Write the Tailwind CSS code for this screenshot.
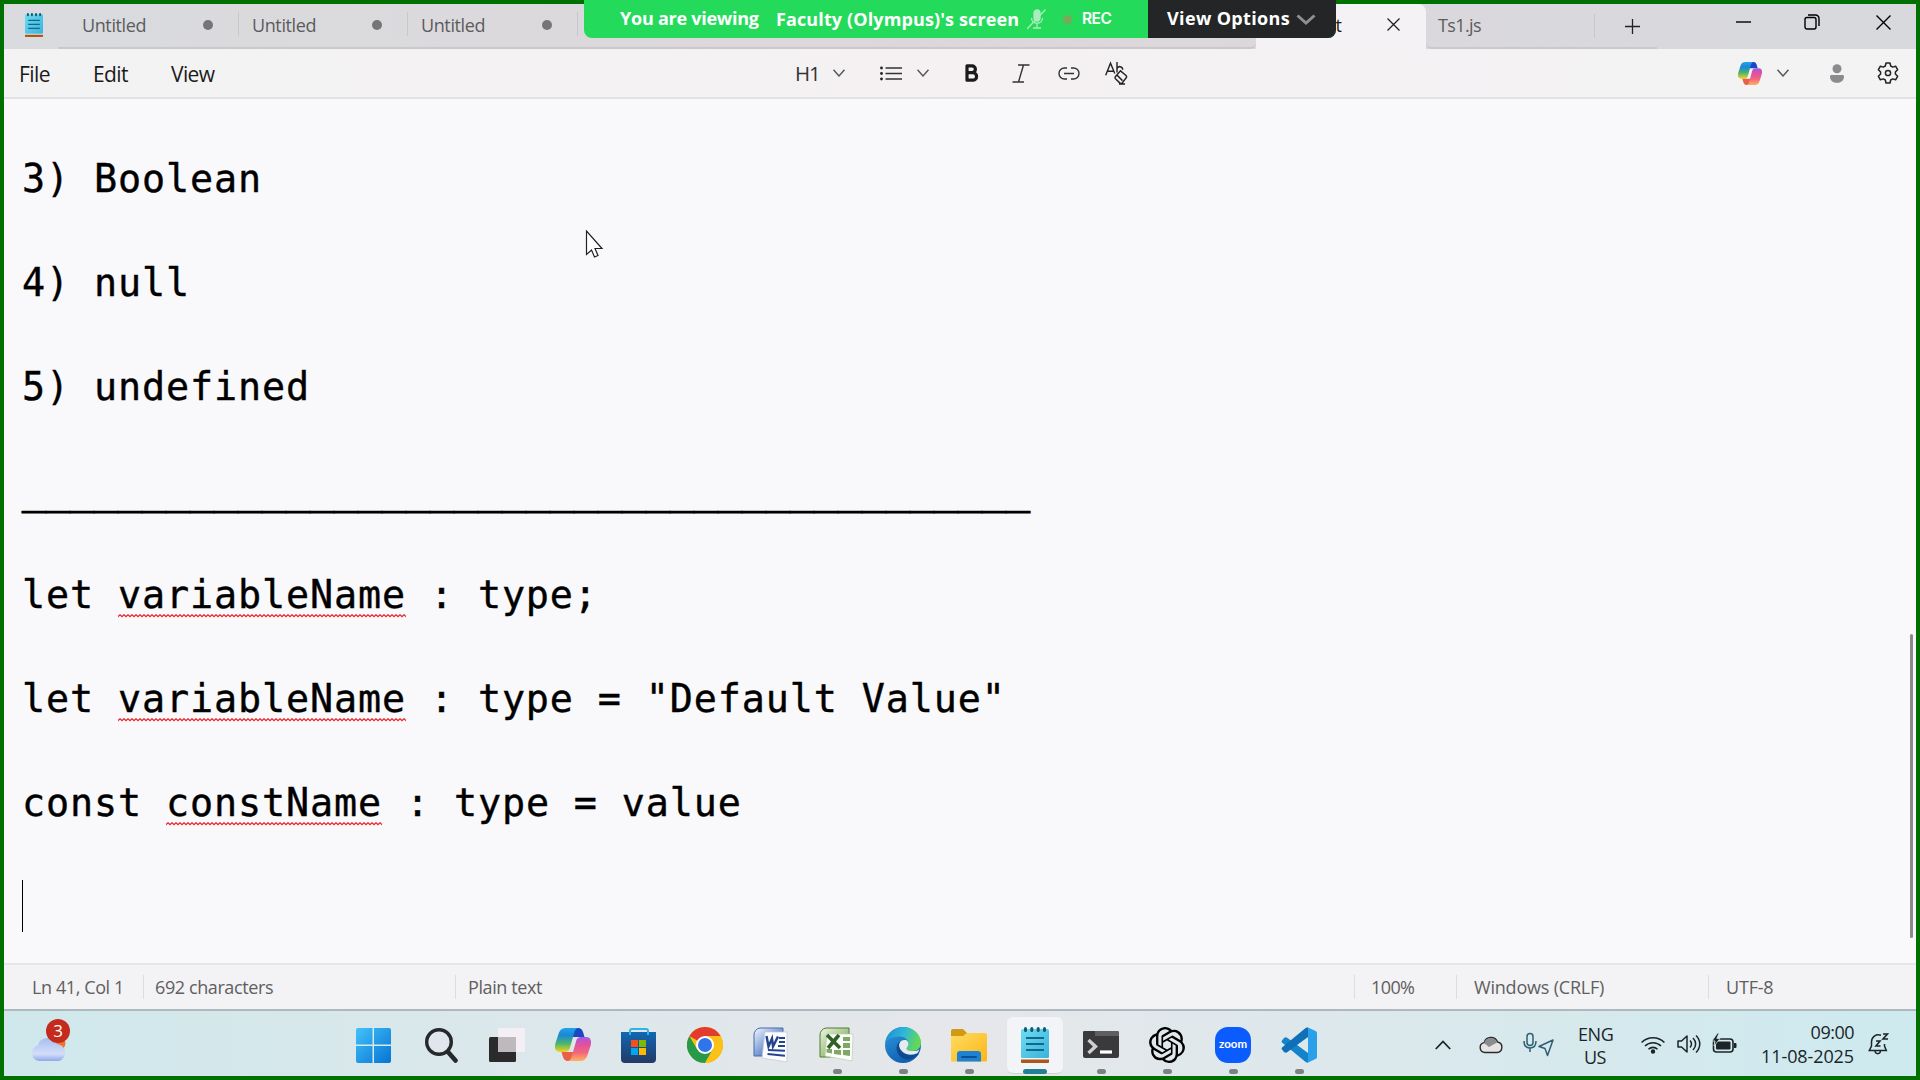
<!DOCTYPE html>
<html lang="en">
<head>
<meta charset="utf-8">
<title>Notepad</title>
<script src="https://cdn.jsdelivr.net/npm/@tailwindcss/browser@4"></script>
</head>
<body class="relative w-[1920px] h-[1080px] overflow-hidden font-['Open_Sans',sans-serif] text-lg leading-6">

<svg class="absolute size-0" aria-hidden="true">
  <defs>
    <linearGradient id="cpA" x1="0" y1="0" x2="0" y2="1"><stop offset="0" stop-color="#1fa4ea"/><stop offset=".3" stop-color="#1b86d8"/><stop offset=".65" stop-color="#4db56c"/><stop offset="1" stop-color="#f2d51c"/></linearGradient>
    <linearGradient id="cpB" x1="0" y1="0" x2="0" y2="1"><stop offset="0" stop-color="#ffb35c"/><stop offset=".35" stop-color="#f2667e"/><stop offset=".7" stop-color="#e0509f"/><stop offset="1" stop-color="#a259e6"/></linearGradient>
    <linearGradient id="npG" x1="0" y1="0" x2="1" y2="1"><stop offset="0" stop-color="#6fdcf2"/><stop offset="1" stop-color="#3ab2dc"/></linearGradient>
    <linearGradient id="winG" gradientUnits="userSpaceOnUse" x1="0" y1="0" x2="35" y2="35"><stop offset="0" stop-color="#42c3fa"/><stop offset="1" stop-color="#0673d3"/></linearGradient>
    <linearGradient id="stG" x1="0" y1="0" x2="0" y2="1"><stop offset="0" stop-color="#1167b3"/><stop offset="1" stop-color="#223a66"/></linearGradient>
    <linearGradient id="edA" x1="0" y1="0" x2="1" y2=".3"><stop offset="0" stop-color="#1d86d4"/><stop offset=".55" stop-color="#2fb8d6"/><stop offset="1" stop-color="#63d75a"/></linearGradient>
    <linearGradient id="edB" x1="0" y1="0" x2=".5" y2="1"><stop offset="0" stop-color="#2b9be0"/><stop offset="1" stop-color="#1160b0"/></linearGradient>
    <linearGradient id="foG" x1="0" y1="0" x2="1" y2="1"><stop offset="0" stop-color="#ffdc62"/><stop offset="1" stop-color="#fbb618"/></linearGradient>
    <linearGradient id="clG" x1="0" y1="0" x2="0" y2="1"><stop offset="0" stop-color="#a9bff0"/><stop offset=".7" stop-color="#d3ddf8"/><stop offset="1" stop-color="#8fa8ea"/></linearGradient>
    <linearGradient id="woG" x1="0" y1="0" x2="1" y2="1"><stop offset="0" stop-color="#f2f6fd"/><stop offset=".5" stop-color="#7f9fd6"/><stop offset="1" stop-color="#2a4a96"/></linearGradient>
    <linearGradient id="exG" x1="0" y1="0" x2="1" y2="1"><stop offset="0" stop-color="#eef5e4"/><stop offset=".5" stop-color="#a9c88c"/><stop offset="1" stop-color="#4f8436"/></linearGradient>
    <pattern id="wave" width="4" height="4" patternUnits="userSpaceOnUse"><path d="M-1 3.500 2 .8 5 3.500" fill="none" stroke="#e8282c" stroke-width="1.300"/></pattern>
    <symbol id="copilot" viewBox="0 0 36 33" preserveAspectRatio="none">
      <path fill="#1a48c4" d="M17 0h6c3.500 0 4.500 2.500 5.300 5L29.500 9H18z"/>
      <path fill="url(#cpA)" d="M11 0h12c-2.500.600-3.300 3-4 5.500L15 19.500c-1 3.500-2.500 4.500-5.500 4.500H5c-4.500 0-6-3.500-4.500-9L3.500 6C4.700 2 7 0 11 0z"/>
      <g transform="rotate(180 18 16.500)">
        <path fill="#e8604a" d="M17 0h6c3.500 0 4.500 2.500 5.300 5L29.500 9H18z"/>
        <path fill="url(#cpB)" d="M11 0h12c-2.500.600-3.300 3-4 5.500L15 19.500c-1 3.500-2.500 4.500-5.500 4.500H5c-4.500 0-6-3.500-4.500-9L3.500 6C4.700 2 7 0 11 0z"/>
      </g>
    </symbol>
    <symbol id="notepad" viewBox="0 0 28 36" preserveAspectRatio="none">
      <rect x="0" y="30" width="28" height="6" rx="1" fill="#a9571b"/>
      <rect x="0" y="30" width="28" height="2.500" fill="#f4f4f4"/>
      <rect x="0" y="2" width="28" height="29" rx="1.500" fill="url(#npG)"/>
      <g fill="#125a72"><rect x="3" y="0" width="3" height="5" rx="1.500"/><rect x="9.300" y="0" width="3" height="5" rx="1.500"/><rect x="15.700" y="0" width="3" height="5" rx="1.500"/><rect x="22" y="0" width="3" height="5" rx="1.500"/></g>
      <path d="M5 11h18M5 17h18M5 23h18" stroke="#0f6987" stroke-width="2"/>
    </symbol>
    <symbol id="chev" viewBox="0 0 12 8" preserveAspectRatio="none"><path d="M.5.800 6 7 11.500.800" fill="none" stroke="currentColor" stroke-width="1.400"/></symbol>
  </defs>
</svg>

<div class="relative w-full h-full border-4 border-[#007000] flex flex-col bg-[#f9f8fb]">

  <!-- Tab strip -->
  <header class="h-[45px] shrink-0 flex bg-linear-to-r from-[#d9dbde] via-[#ddd7db] to-[#d7d9dd] text-[#5c5c5e]">
    <div class="w-[54px] flex pl-[21px] pt-[9px]"><svg class="w-[18px] h-6"><use href="#notepad"/></svg></div>
    <div class="w-[1198px] h-full flex border-b-2 border-[#cbc7cb] rounded-br-md pl-[11px]">
      <div class="w-[170px] h-[43px] flex items-center pl-[13px] pb-[9px]"><span class="tracking-[-0.4px] w-[120px] mt-[7px]">Untitled</span><i class="size-[10px] rounded-full bg-[#757577] mt-[8px] ml-px"></i><b class="ml-auto w-px h-6 bg-[#c9c7ca] mt-1.5"></b></div>
      <div class="w-[169px] h-[43px] flex items-center pl-[13px] pb-[9px]"><span class="tracking-[-0.4px] w-[119px] mt-[7px]">Untitled</span><i class="size-[10px] rounded-full bg-[#757577] mt-[8px] ml-px"></i><b class="ml-auto w-px h-6 bg-[#c9c7ca] mt-1.5"></b></div>
      <div class="w-[170px] h-[43px] flex items-center pl-[13px] pb-[9px]"><span class="tracking-[-0.4px] w-[120px] mt-[7px]">Untitled</span><i class="size-[10px] rounded-full bg-[#757577] mt-[8px] ml-px"></i><b class="ml-auto w-px h-6 bg-[#c9c7ca] mt-1.5"></b></div>
    </div>
    <div class="w-[170px] h-full bg-[#f4f2f4] rounded-tr-lg flex items-center text-[#1b1b1b]">
      <span class="w-[86px] text-right -mt-1">t</span>
      <svg class="w-[13px] h-[13px] ml-[45px] -mt-1" viewBox="0 0 13 13"><path d="M.5.500l12 12M12.500.500l-12 12" stroke="#222" stroke-width="1.300"/></svg>
    </div>
    <div class="w-[231px] h-full border-b-2 border-[#cbc7cb] rounded-bl-md flex items-center pl-[12px]">
      <span class="tracking-[-0.6px] w-[156px] -mt-0.5">Ts1.js</span><b class="w-px h-6 bg-[#c9c7ca] mt-px"></b>
      <svg class="size-[15px] ml-[30px] mt-0.5" viewBox="0 0 15 15"><path d="M7.500 0v15M0 7.500h15" stroke="#222" stroke-width="1.300"/></svg>
    </div>
    <div class="flex h-9 items-center text-black">
      <svg class="w-[15px] h-4 ml-[79px]" viewBox="0 0 15 16"><path d="M0 8h15" stroke="currentColor" stroke-width="1.400"/></svg>
      <svg class="size-[16px] ml-[53px]" viewBox="0 0 16 16" fill="none" stroke="currentColor" stroke-width="1.400"><rect x="1" y="3.500" width="11" height="11.500" rx="2"/><path d="M4 1h7.500a3.500 3.500 0 0 1 3.500 3.500V12"/></svg>
      <svg class="size-[15px] ml-[56px]" viewBox="0 0 15 15"><path d="M.5.500l14 14M14.500.500l-14 14" stroke="currentColor" stroke-width="1.400"/></svg>
    </div>
  </header>

  <!-- Menu and formatting bar -->
  <nav class="h-[50px] shrink-0 flex items-center bg-linear-to-r from-[#f3f3f3] via-[#f5f1f3] to-[#f3f3f4] border-b-2 border-[#e3e2e3] text-[#1b1b1b] text-[21px]">
    <span class="ml-[15px] w-[74px] mt-0.5 tracking-[-0.6px]">File</span>
    <span class="w-[78px] mt-0.5 tracking-[-0.6px]">Edit</span>
    <span class="w-[624px] mt-0.5 tracking-[-0.6px]">View</span>
    <span class="w-[38px] text-[20.5px] tracking-[-1px] text-[#333]">H1</span>
    <svg class="w-[12px] h-[8px] text-[#555]"><use href="#chev"/></svg>
    <svg class="w-[22px] h-[15px] ml-[35px]" viewBox="0 0 22 15"><path d="M5.500 2H22M5.500 7.500H22M5.500 13H22" stroke="#333" stroke-width="1.400"/><g fill="#222"><circle cx="1.500" cy="2" r="1.400"/><circle cx="1.500" cy="7.500" r="1.400"/><circle cx="1.500" cy="13" r="1.400"/></g></svg>
    <svg class="w-[12px] h-[8px] ml-[15px] text-[#555]"><use href="#chev"/></svg>
    <svg class="w-[14px] h-[18px] ml-[36px]" viewBox="0 0 14 18"><path d="M2 1.800h5a3.400 3.400 0 0 1 0 6.800H2zM2 8.600h5.800a3.800 3.800 0 0 1 0 7.600H2z" fill="none" stroke="#1b1b1b" stroke-width="3.200" stroke-linejoin="round"/></svg>
    <svg class="w-[18px] h-[19px] ml-[33px]" viewBox="0 0 18 19"><path d="M6 1h11.500M.5 18H12M11.500 1l-5 17" fill="none" stroke="#333" stroke-width="1.400"/></svg>
    <svg class="w-[22px] h-[13px] ml-[28px]" viewBox="0 0 22 13" fill="none" stroke="#333" stroke-width="1.400"><path d="M9 1H6.500a5.500 5.500 0 0 0 0 11H9M13 1h2.500a5.500 5.500 0 0 1 0 11H13M6 6.500h10"/></svg>
    <svg class="w-[23px] h-[24px] ml-[25px]" viewBox="0 0 23 22" preserveAspectRatio="none" fill="none" stroke="#222" stroke-width="1.400"><path d="M.7 13 5.500 2l4.300 9.500M2.300 9.300h6M12 1v9.500M12 7c1-2.800 5.800-2.300 5.700 1"/><path d="m15.500 9 5.500 4.300c.8.700.8 1.300.2 2L17 20.300c-.7.700-1.300.7-2 0l-4.500-4c-.7-.7-.6-1.300 0-2zM12 13l5.500 5M14 21h6"/></svg>
    <svg class="w-[24px] h-[23px] ml-[610px]"><use href="#copilot"/></svg>
    <svg class="w-[12px] h-[8px] ml-[15px] text-[#555]"><use href="#chev"/></svg>
    <svg class="w-[14px] h-[19px] ml-[41px]" viewBox="0 0 14 19" fill="#8b8b8d"><circle cx="7" cy="4.700" r="4.500"/><path d="M1.500 11h11c1 0 1.500.500 1.500 1.500 0 4-3 6.300-7 6.300s-7-2.300-7-6.300c0-1 .5-1.500 1.500-1.500z"/></svg>
    <svg class="size-[22px] ml-[33px]" viewBox="0 0 22 22" fill="none" stroke="#222" stroke-width="1.500" stroke-linejoin="round"><path d="M9 1h4l.7 3 2 1.100 2.900-.9 2 3.500L18.400 10v2l2.200 2.300-2 3.500-2.900-.9-2 1.100-.7 3H9l-.7-3-2-1.100-2.900.9-2-3.500L3.600 12v-2L1.400 7.700l2-3.500 2.900.9 2-1.100z"/><circle cx="11" cy="11" r="2.600"/></svg>
  </nav>

  <!-- Document -->
  <main class="relative h-[864px] shrink-0 pl-[18px] pt-[54px] font-['DejaVu_Sans_Mono',monospace] text-[38.4px] leading-[52px] tracking-[0.88px] text-black [-webkit-text-stroke:0.4px_black]">
    <p class="h-[104px]">3) Boolean</p>
    <p class="h-[104px]">4) null</p>
    <p class="h-[104px]">5) undefined</p>
    <p class="h-[104px] -mt-px mb-px text-[39.87px] tracking-normal [-webkit-text-stroke:1.2px_black]">__________________________________________</p>
    <p class="h-[104px]">let <span class="relative inline-block">variableName<svg class="absolute left-0 top-[45px] w-full h-1"><rect width="100%" height="4" fill="url(#wave)"/></svg></span> : type;</p>
    <p class="h-[104px]">let <span class="relative inline-block">variableName<svg class="absolute left-0 top-[45px] w-full h-1"><rect width="100%" height="4" fill="url(#wave)"/></svg></span> : type = "Default Value"</p>
    <p class="h-[104px]">const <span class="relative inline-block">constName<svg class="absolute left-0 top-[45px] w-full h-1"><rect width="100%" height="4" fill="url(#wave)"/></svg></span> : type = value</p>
    <p class="h-[52px] -mt-px border-l border-black"></p>
    <i class="absolute right-[3px] top-[535px] w-[3px] h-[304px] rounded bg-[#8b8a8d]"></i>
    <svg class="absolute left-[581px] top-[131px] w-[20px] h-[29px]" viewBox="0 0 20 29"><path d="M1.500 1v23.500l5-4.500 3 7 3.500-1.500-3-7H17z" fill="#fff" stroke="#222" stroke-width="1.200"/></svg>
  </main>

  <!-- Status bar -->
  <footer class="h-[48px] shrink-0 flex items-center border-t-2 border-t-[#e6e5e7] border-b-2 border-b-[#adb9bf] bg-[#f3f2f4] text-[#5f5f61]">
    <span class="ml-[28px] w-[111px] tracking-[-0.4px]">Ln 41, Col 1</span><b class="w-px h-6 bg-[#dddce0]"></b>
    <span class="ml-[11px] w-[300px] tracking-[-0.4px]">692 characters</span><b class="w-px h-6 bg-[#dddce0]"></b>
    <span class="ml-[12px] w-[886px] tracking-[-0.4px]">Plain text</span><b class="w-px h-6 bg-[#dddce0]"></b>
    <span class="ml-[16px] w-[85px] tracking-[-0.6px]">100%</span><b class="w-px h-6 bg-[#dddce0]"></b>
    <span class="ml-[17px] w-[234px] tracking-[-0.2px]">Windows (CRLF)</span><b class="w-px h-6 bg-[#dddce0]"></b>
    <span class="ml-[17px] tracking-[-0.2px]">UTF-8</span>
  </footer>

  <!-- Taskbar -->
  <div class="h-[65px] shrink-0 flex bg-linear-to-r from-[#cfe8ec] via-[#e6e7ea] to-[#cdeaef] text-[#1b2528]">
    <div class="relative w-[336px] h-full">
      <svg class="absolute left-[25px] top-[13px] w-10 h-[38px]" viewBox="0 0 40 38"><circle cx="29" cy="19" r="7.500" fill="#f2742b"/><path d="M10 37a8 8 0 0 1-1.500-15.500A10.500 10.500 0 0 1 28 20a8.700 8.700 0 0 1 2 17z" fill="url(#clG)"/></svg>
      <span class="absolute left-[42px] top-2 size-6 rounded-full bg-[#c42b1c] text-white text-[17px] text-center">3</span>
    </div>
    <div class="flex h-full">
      <div class="w-[66px] pt-[17px] pl-4"><svg class="size-[35px]" viewBox="0 0 35 35"><path fill="url(#winG)" d="M2 0h14.500v16.500H0V2a2 2 0 0 1 2-2zM18 0h15a2 2 0 0 1 2 2v14.500H18zM0 18h16.500v17H2a2 2 0 0 1-2-2zM18 18h17v15a2 2 0 0 1-2 2H18z"/></svg></div>
      <div class="w-[66px] pt-[17px] pl-[19px]"><svg class="w-[33px] h-[35px]" viewBox="0 0 33 35"><circle cx="14" cy="14" r="12.300" fill="#dfe6ec" stroke="#24292c" stroke-width="3.400"/><path d="m23.500 24.500 7 8" stroke="#24292c" stroke-width="4.600" stroke-linecap="round"/></svg></div>
      <div class="w-[66px] pt-[17px] pl-[17px]"><svg class="w-9 h-[34px]" viewBox="0 0 36 34"><rect x="0" y="9" width="27" height="25" rx="1.500" fill="#2b2b2b"/><rect x="9" y="0" width="27" height="24" rx="1.500" fill="#f5eff6" fill-opacity=".9"/><path d="M9 9h18v15H9z" fill="#bdb9bd"/></svg></div>
      <div class="w-[66px] pt-[17px] pl-[17px]"><svg class="w-9 h-[33px]"><use href="#copilot"/></svg></div>
      <div class="w-[66px] pt-[17px] pl-[17px]"><svg class="w-[35px] h-[35px]" viewBox="0 0 35 35"><path d="M9 6V3a2 2 0 0 1 2-2h14a2 2 0 0 1 2 2v3" fill="none" stroke="#2fb4e6" stroke-width="2"/><path d="M0 4h35v27a4 4 0 0 1-4 4H4a4 4 0 0 1-4-4z" fill="url(#stG)"/><path d="M9 7V4M27 7V4" stroke="#2fb4e6" stroke-width="2"/><path fill="#f25022" d="M10 12h7v7h-7z"/><path fill="#7fba00" d="M18 12h7v7h-7z"/><path fill="#00a4ef" d="M10 20h7v7h-7z"/><path fill="#ffb900" d="M18 20h7v7h-7z"/></svg></div>
      <div class="w-[66px] pt-[16px] pl-[17px]"><svg class="size-9" viewBox="0 0 36 36"><circle cx="18" cy="18" r="18" fill="#fbc116"/><path d="M18 18 2.410 9A18 18 0 0 1 33.600 9z" fill="#e33b2e"/><path d="M2.410 9A18 18 0 0 0 18 36l7.800-13.500L18 18l-7.800 4.500z" fill="#269a48"/><path d="M33.600 9H18v9l7.800 4.500L18 36A18 18 0 0 0 33.600 9z" fill="#fbc116"/><circle cx="18" cy="18" r="9" fill="#fff"/><circle cx="18" cy="18" r="7" fill="#2f74e8"/></svg></div>
      <div class="w-[66px] pt-[16px] pl-[17px]"><svg class="w-[35px] h-9" viewBox="0 0 35 36"><path d="M7 1h23v28H1V8a7 7 0 0 1 6-7z" fill="url(#woG)" stroke="#4a68ae"/><path d="M12 5h22v30L9 31z" fill="#fdfdff" stroke="#c6cbd9" stroke-width=".8"/><path d="M26 11h6M26 15h6M25 19h7M15 23l17 .8M14.500 27l17.500 1.700" stroke="#24448f" stroke-width="2"/><path d="m13.500 9 2 10.500 3.500-8 1 8L25 9.500" fill="none" stroke="#24448f" stroke-width="2.400"/></svg></div>
      <div class="w-[66px] pt-[16px] pl-[17px] relative"><svg class="w-[35px] h-9" viewBox="0 0 35 36"><path d="M7 1h23v29H1V8a7 7 0 0 1 6-7z" fill="url(#exG)" stroke="#4b7f33"/><path d="M8 7h26l-1 27-27-5z" fill="#fdfffb" stroke="#c3cdbb" stroke-width=".8"/><g fill="#7fa765"><path d="M24 10h7v4h-7zM24 16h7v5h-7zM24 23h7v6l-7-1zM15 23h7v5l-7-1zM7.500 22H13v4.500l-5.500-1z"/></g><path d="m8 8 13 13M20 8 9 21" stroke="#2f6326" stroke-width="3.600"/></svg><i class="absolute left-[31px] top-[58px] w-[9px] h-[5px] rounded-full bg-[#7e8184]"></i></div>
      <div class="w-[66px] pt-[16px] pl-[17px] relative"><svg class="size-9" viewBox="0 0 36 36"><circle cx="18" cy="18" r="18" fill="url(#edB)"/><path d="M.3 16C1.500 6.500 9 0 18 0c10 0 18 7.500 18 15.500 0 5-3.500 8.500-8.500 8.500-4 0-6-1.300-6-2.500s2-2 2-5c0-4-4-7-9-7C7.500 9.500 2 12.500.3 16z" fill="url(#edA)"/><path d="M15 14.500c-6 4-4 15 4.500 17.500 6 1.500 11-1 14-4.800.4-.6-.2-1-.8-.7C24 30.500 14 26 15 14.500z" fill="#0f4a94"/><path d="M21.500 21.500c0-1.200 2-2 2-5 0-1.500-1-2.800-2.500-3.500-4-.5-6.500 1.500-7 5 .5 6.500 7 10.500 14 9.500 2-.3 3.500-1 4.500-1.500l2-3.500c-2 1.200-4.500 1.700-7 1.500-4 0-6-1.300-6-2.500z" fill="#e8ebee"/></svg><i class="absolute left-[31px] top-[58px] w-[9px] h-[5px] rounded-full bg-[#7e8184]"></i></div>
      <div class="w-[66px] pt-[18px] pl-[17px] relative"><svg class="w-9 h-[33px]" viewBox="0 0 36 33"><path d="M0 2a2 2 0 0 1 2-2h10l4 4h8v6H0z" fill="#d29a13"/><path d="M0 7h12l4-3h18a2 2 0 0 1 2 2v25a1.500 1.500 0 0 1-1.500 1.500h-33A1.500 1.500 0 0 1 0 31z" fill="url(#foG)"/><path d="M6 32.500V25a3 3 0 0 1 3-3h18a3 3 0 0 1 3 3v7.500z" fill="#1c83d4"/><path d="M11 28h14" stroke="#0c4f96" stroke-width="2" stroke-linecap="round"/></svg><i class="absolute left-[31px] top-[58px] w-[9px] h-[5px] rounded-full bg-[#7e8184]"></i></div>
      <div class="w-[66px] pt-[6px] pl-[7px] relative"><div class="w-[56px] h-[57px] rounded-md bg-[#f3f4f7] border-b border-[#cfd3d6] pt-[10px] pl-[14px]"><svg class="w-[28px] h-9"><use href="#notepad"/></svg></div><i class="absolute left-[23px] top-[58px] w-[24px] h-[5px] rounded-full bg-[#237f93]"></i></div>
      <div class="w-[66px] pt-[20px] pl-[17px] relative"><svg class="w-9 h-[27px]" viewBox="0 0 36 27"><rect width="36" height="27" rx="2" fill="#3a3a3c"/><path d="M2 0h32a2 2 0 0 1 2 2v3H0V2a2 2 0 0 1 2-2z" fill="#5f5f61"/><path d="M0 2a2 2 0 0 1 2-2h10v5H0z" fill="#3a3a3c"/><path d="m5.500 9 7 6.500-7 6.500" fill="none" stroke="#d0d0d0" stroke-width="3.400"/><path d="M17 21h12" stroke="#fff" stroke-width="3.200"/></svg><i class="absolute left-[31px] top-[58px] w-[9px] h-[5px] rounded-full bg-[#7e8184]"></i></div>
      <div class="w-[66px] pt-[16px] pl-[17px] relative"><svg class="size-9" viewBox="0 0 24 24"><path d="M22.2819 9.8211a5.9847 5.9847 0 0 0-.5157-4.9108 6.0462 6.0462 0 0 0-6.5098-2.9A6.0651 6.0651 0 0 0 4.9807 4.1818a5.9847 5.9847 0 0 0-3.9977 2.9 6.0462 6.0462 0 0 0 .7427 7.0966 5.98 5.98 0 0 0 .511 4.9107 6.051 6.051 0 0 0 6.5146 2.9001A5.9847 5.9847 0 0 0 13.2599 24a6.0557 6.0557 0 0 0 5.7718-4.2058 5.9894 5.9894 0 0 0 3.9977-2.9001 6.0557 6.0557 0 0 0-.7475-7.0729zm-9.022 12.6081a4.4755 4.4755 0 0 1-2.8764-1.0408l.1419-.0804 4.7783-2.7582a.7948.7948 0 0 0 .3927-.6813v-6.7369l2.02 1.1686a.071.071 0 0 1 .038.052v5.5826a4.504 4.504 0 0 1-4.4945 4.4944zm-9.6607-4.1254a4.4708 4.4708 0 0 1-.5346-3.0137l.142.0852 4.783 2.7582a.7712.7712 0 0 0 .7806 0l5.8428-3.3685v2.3324a.0804.0804 0 0 1-.0332.0615L9.74 19.9502a4.4992 4.4992 0 0 1-6.1408-1.6464zM2.3408 7.8956a4.485 4.485 0 0 1 2.3655-1.9728V11.6a.7664.7664 0 0 0 .3879.6765l5.8144 3.3543-2.0201 1.1685a.0757.0757 0 0 1-.071 0l-4.8303-2.7865A4.504 4.504 0 0 1 2.3408 7.872zm16.5963 3.8558L13.1038 8.364 15.1192 7.2a.0757.0757 0 0 1 .071 0l4.8303 2.7913a4.4944 4.4944 0 0 1-.6765 8.1042v-5.6772a.79.79 0 0 0-.407-.667zm2.0107-3.0231l-.142-.0852-4.7735-2.7818a.7759.7759 0 0 0-.7854 0L9.409 9.2297V6.8974a.0662.0662 0 0 1 .0284-.0615l4.8303-2.7866a4.4992 4.4992 0 0 1 6.6802 4.66zM8.3065 12.863l-2.02-1.1638a.0804.0804 0 0 1-.038-.0567V6.0742a4.4992 4.4992 0 0 1 7.3757-3.4537l-.142.0805L8.704 5.459a.7948.7948 0 0 0-.3927.6813zm1.0976-2.3654l2.602-1.4998 2.6069 1.4998v2.9994l-2.5974 1.4997-2.6067-1.4997Z"/></svg><i class="absolute left-[31px] top-[58px] w-[9px] h-[5px] rounded-full bg-[#7e8184]"></i></div>
      <div class="w-[66px] pt-[16px] pl-[17px] relative"><div class="size-9 rounded-[13px] bg-[#0b5cff] text-white font-['Lato',sans-serif] font-bold text-[11.5px] leading-[34px] text-center">zoom</div><i class="absolute left-[31px] top-[58px] w-[9px] h-[5px] rounded-full bg-[#7e8184]"></i></div>
      <div class="w-[66px] pt-[16px] pl-[17px] relative"><svg class="size-9" viewBox="0 0 36 36"><path d="M1 13.500 3 11q1.500-1.500 3.500 0L27 26v9.500q-1.500.5-3-1L1 15.500q-1-1 0-2z" fill="#1583cc"/><path d="M1 22.500 3 25q1.500 1.500 3.500 0L27 10V.5q-1.500-.5-3 1L1 20.500q-1 1 0 2z" fill="#0f6fb8"/><path d="m26 0 8.500 4Q36 4.700 36 6v24q0 1.300-1.500 2L26 36q1-.5 1-2V2q0-1.500-1-2z" fill="#2aa0ea"/></svg><i class="absolute left-[31px] top-[58px] w-[9px] h-[5px] rounded-full bg-[#7e8184]"></i></div>
    </div>
    <div class="flex h-full pt-[21px] ml-[105px]">
      <svg class="w-[16px] h-[10px] mt-[8px] shrink-0" viewBox="0 0 16 10"><path d="M.8 9 8 1.500 15.200 9" fill="none" stroke="currentColor" stroke-width="1.800"/></svg>
      <svg class="w-[24px] h-[18px] ml-[28px] mt-[4px]" viewBox="0 0 24 18"><path d="M6 16.500a5 5 0 0 1-.8-9.900A7 7 0 0 1 18.500 6 5.300 5.300 0 0 1 18 16.500z" fill="#e4e4e4" stroke="#2a2a2a" stroke-width="1.400"/><path d="M5.200 7A6.700 6.700 0 0 1 18 6.500L10 11z" fill="#8a8c8e"/></svg>
      <svg class="w-[32px] h-[25px] ml-[20px]" viewBox="0 0 32 25" fill="none" stroke="#2d5f73" stroke-width="1.500"><rect x="4" y="1.500" width="6" height="12" rx="3"/><path d="M1 9c0 4.500 2.500 7 6 7s6-2.500 6-7M7 16v4M30 8l-5.500 15.500-2.500-7-6-2z" stroke-linejoin="round"/></svg>
      <div class="w-[34px] ml-[23px] -mt-[9px] text-center leading-[23px]"><p class="tracking-[-0.4px]">ENG</p><p class="tracking-[-0.4px]">US</p></div>
      <svg class="w-[24px] h-[19px] ml-[29px] mt-[3px]" viewBox="0 0 24 19" fill="none" stroke="currentColor" stroke-width="1.600"><path d="M.6 7.500a16 16 0 0 1 22.800 0M4 11a11.300 11.300 0 0 1 16 0M7.500 14.200a6.400 6.400 0 0 1 9 0"/><circle cx="12" cy="16.500" r="1.400" fill="currentColor"/></svg>
      <svg class="w-[24px] h-[20px] ml-[12px] mt-[2px]" viewBox="0 0 24 20" fill="none" stroke="currentColor" stroke-width="1.500"><path d="M1 7v6h3.500L10 18V2L4.500 7zM13 6.500c2 2 2 5 0 7M16 4c3.500 3.500 3.500 8.500 0 12M19 1.500c5 5 5 12 0 17" stroke-linejoin="round"/></svg>
      <svg class="w-[25px] h-[20px] ml-[11px] mt-[1px]" viewBox="0 0 25 20"><rect x="1.500" y="6" width="19.500" height="13" rx="3" fill="none" stroke="currentColor" stroke-width="1.600"/><rect x="4" y="8.500" width="14.500" height="8" rx="1" fill="currentColor"/><path d="M22 10h1.500q1 0 1 1v3q0 1-1 1H22z" fill="currentColor"/><path d="M5.500 0 0 8h3l-1 5 6-7.500H4.800L7 0z" fill="currentColor" stroke="#cfe9ee" stroke-width=".8"/></svg>
      <div class="w-[93px] ml-[24px] -mt-[12px] text-right leading-6"><p class="tracking-[-0.5px]">09:00</p><p class="tracking-[-0.1px] whitespace-nowrap">11-08-2025</p></div>
      <svg class="w-[21px] h-[22px] ml-[14px] mt-[1px]" viewBox="0 0 21 22" fill="none" stroke="currentColor" stroke-width="1.500"><path d="M13 2.300C8 .8 3.500 3.500 3.500 9v4L1.300 17.500h17L16.500 13v-2M7 18c.5 3.500 5 3.500 5.500 0"/><path d="M8 8h4l-4 5h4.500M15 1h4.500L15 6h5" stroke-width="1.600"/></svg>
    </div>
  </div>
</div>

<!-- Screen-share banner, floats over the window -->
<div class="absolute left-[584px] top-0 w-[752px] h-[38px] flex items-center rounded-b-lg overflow-hidden bg-[#24da5b] text-white font-bold whitespace-nowrap">
  <span class="ml-[36px] w-[156px] -mt-0.5 tracking-[-0.25px]">You are viewing</span>
  <span class="w-[251px] -mt-px tracking-[0.12px]">Faculty (Olympus)'s screen</span>
  <svg class="w-[19px] h-[21px] opacity-70" viewBox="0 0 19 21" fill="none" stroke="#dff7e6" stroke-width="1.300"><rect x="7" y="1" width="6" height="11" rx="3" fill="#dff7e6"/><path d="M4.500 9c0 7 11 7 11 0M10 14.500V19M6 19h8M18.500.5 0 20"/></svg>
  <i class="size-[9px] rounded-full bg-[#7aa95a] ml-[17px]"></i>
  <span class="font-['Inter',sans-serif] font-semibold text-[15.5px] ml-[10px] w-[66px] tracking-[-0.5px]">REC</span>
  <div class="h-full flex-1 bg-[#232527] flex items-center pl-[19px]"><span class="w-[129px] -mt-0.5 tracking-[0.35px]">View Options</span><svg class="w-[20px] h-[11px]" viewBox="0 0 20 11"><path d="M1.500 1.500 10 9l8.500-7.500" fill="none" stroke="#8e8f90" stroke-width="3"/></svg></div>
</div>
</body>
</html>
